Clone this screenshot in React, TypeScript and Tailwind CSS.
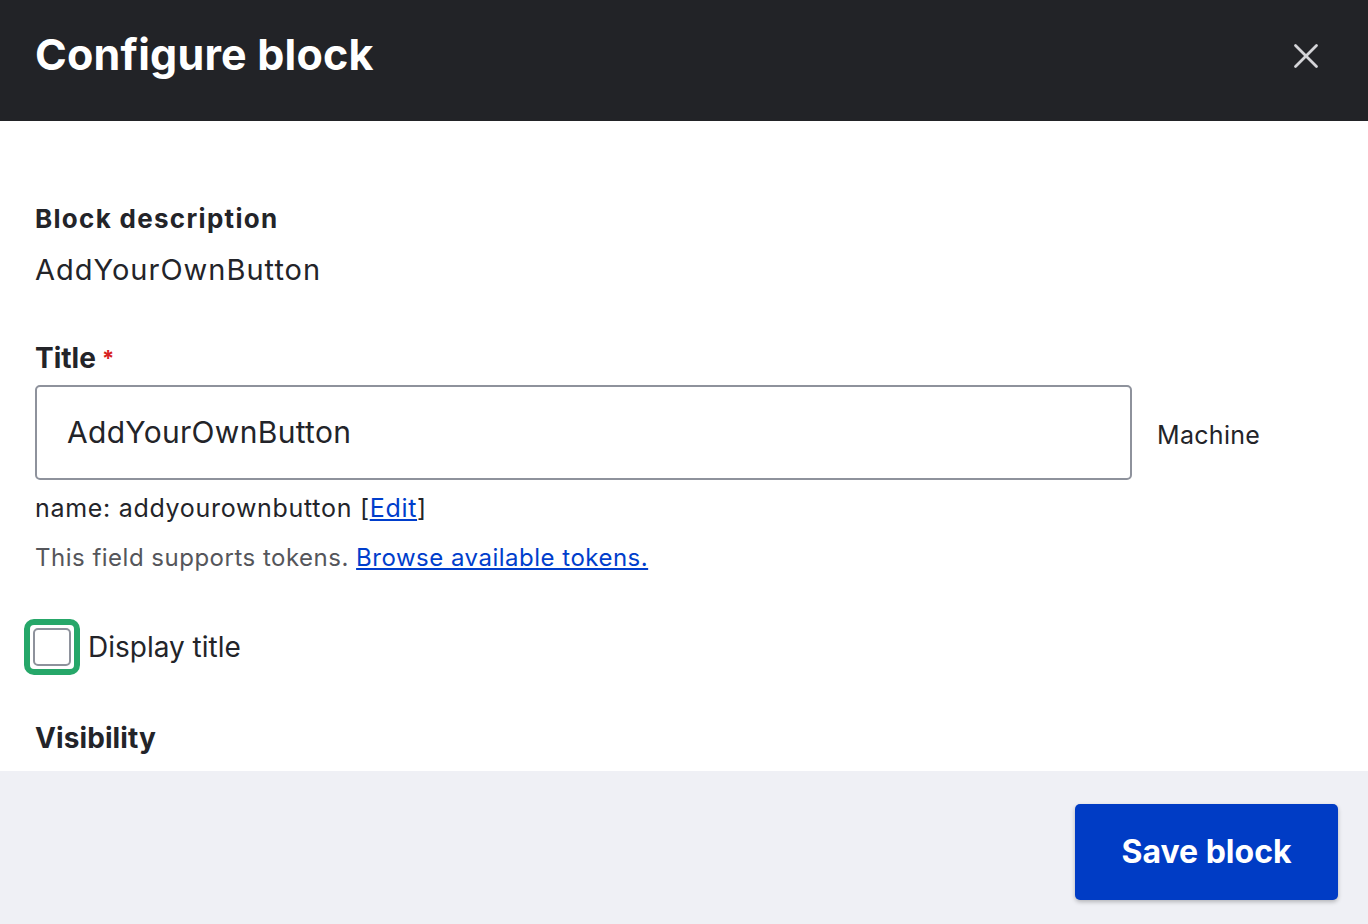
import { X } from "lucide-react";

export default function App() {
  return (
    <div
      className="flex h-[924px] w-[1368px] flex-col overflow-hidden bg-white text-[#232429]"
      style={{ fontFamily: "Inter, 'Noto Sans', sans-serif" }}
    >
      {/* header */}
      <div className="flex h-[121px] shrink-0 items-center justify-between bg-[#222327] pl-[35px] pr-[41px]">
        <h1 className="pb-[12px] text-[43px] font-bold tracking-[0.2px] text-white">Configure block</h1>
        <button className="pb-[10px] text-[#d4d4d8]">
          <X className="h-[42px] w-[42px]" strokeWidth={1.6} />
        </button>
      </div>

      {/* body */}
      <div className="flex-1 px-[35px] pt-[80px]">
        <div className="text-[26px] font-bold leading-[36px] tracking-[1.3px]">Block description</div>
        <div className="mt-[16px] text-[29px] leading-[34px] tracking-[1px]">AddYourOwnButton</div>

        <div className="mt-[54px] flex items-start text-[28px] font-bold leading-[34px]">
          Title<span className="ml-[6px] text-[22px] text-[#d72222]">*</span>
        </div>

        <div className="mt-[10px] flex items-center">
          <div className="flex h-[95px] w-[1097px] items-center rounded-[5px] border-2 border-[#8e929c] px-[30px] text-[30px] tracking-[0.3px]">
            AddYourOwnButton
          </div>
          <span className="ml-[25px] pt-[6px] text-[25px] tracking-[0.3px]">Machine</span>
        </div>

        <div className="mt-[12px] text-[25px] leading-[32px] tracking-[0.7px]">
          name: addyourownbutton [<a className="text-[#003ecc] underline">Edit</a>]
        </div>
        <div className="mt-[18px] text-[24px] leading-[32px] tracking-[0.5px] text-[#55565b]">
          This field supports tokens.{" "}
          <a className="text-[#003ecc] underline">Browse available tokens.</a>
        </div>

        <div className="mt-[45px] -ml-[11px] flex items-center gap-[8px]">
          <div className="flex h-[56px] w-[56px] items-center justify-center rounded-[10px] border-[6px] border-[#26a769] bg-white">
            <div className="h-[38px] w-[38px] rounded-[5px] border-2 border-[#8e929c]" />
          </div>
          <span className="text-[28px]">Display title</span>
        </div>

        <div className="mt-[46px] text-[28px] font-bold leading-[34px] tracking-[0.1px]">Visibility</div>
      </div>

      {/* footer */}
      <div className="flex h-[153px] shrink-0 items-start justify-end bg-[#eff0f5] pr-[30px] pt-[33px]">
        <button className="h-[96px] w-[263px] rounded-[5px] bg-[#003cc5] text-[32px] font-bold text-white shadow-[0_2px_4px_rgba(0,0,0,0.25)]">
          Save block
        </button>
      </div>
    </div>
  );
}
